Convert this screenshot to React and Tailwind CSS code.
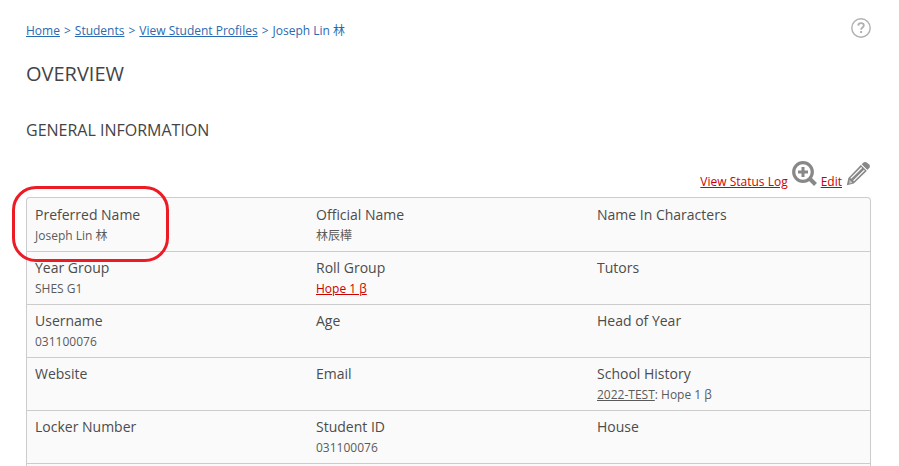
import React from "react";

const rows = [
  [
    { label: "Preferred Name", value: "Joseph Lin 林" },
    { label: "Official Name", value: "林辰樺" },
    { label: "Name In Characters" },
  ],
  [
    { label: "Year Group", value: "SHES G1" },
    {
      label: "Roll Group",
      value: (
        <a href="#roll-group" className="text-[#cc0000] underline">
          Hope 1 β
        </a>
      ),
    },
    { label: "Tutors" },
  ],
  [
    { label: "Username", value: "031100076" },
    { label: "Age" },
    { label: "Head of Year" },
  ],
  [
    { label: "Website" },
    { label: "Email" },
    {
      label: "School History",
      value: (
        <>
          <span className="underline">2022-TEST</span>: Hope 1 β
        </>
      ),
    },
  ],
  [
    { label: "Locker Number" },
    { label: "Student ID", value: "031100076" },
    { label: "House" },
  ],
];

const HelpIcon = () => (
  <svg viewBox="0 0 20 20" className="w-5 h-5" fill="none" stroke="#b0b0b0" aria-hidden="true">
    <circle cx="10" cy="10" r="9.2" strokeWidth="1.4" />
    <path d="M7.2 7.6C7.3 5.9 8.4 5.1 10 5.1c1.7 0 2.8.9 2.8 2.3 0 2-2.7 2.1-2.7 4.3" strokeWidth="1.8" />
    <path d="M10.1 13v2" strokeWidth="2" />
  </svg>
);

const ZoomIcon = () => (
  <svg viewBox="0 0 25 25" className="w-[25px] h-[25px]" fill="none" stroke="#888" aria-hidden="true">
    <circle cx="11" cy="11" r="9.3" strokeWidth="3.2" />
    <path d="M11 6v10M6 11h10" strokeWidth="3" />
    <path d="M17.5 17.5l6 6" strokeWidth="4" />
  </svg>
);

const PencilIcon = () => (
  <svg viewBox="0 0 25 25" className="w-[25px] h-[25px]" fill="#888" aria-hidden="true">
    <path d="M15.6 3.2L17.8 1.3Q19.3.4 20.8 1.5l2.4 2.1q1.400 1.500.4 3l-2.200 2.400z" />
    <path d="M15 3.800l6 6L7.800 22.600.8 24.300 2.400 17z" />
    <path d="M14.900 3.400l6.800 6.600" stroke="#fff" strokeWidth="1" />
    <path d="M15.700 6.500L4.800 17.400M18.400 9.100L7.500 19.900" stroke="#fff" strokeWidth="1.200" />
    <path d="M3.500 18.800l3 2.900-3.200 1z" fill="#fff" fillOpacity=".55" />
  </svg>
);

export default function App() {
  return (
    <main className="pl-[26px] pr-7 pt-[18px] bg-white text-[#444] font-['Open_Sans','Noto_Sans_CJK_TC',sans-serif]">
      <header className="flex items-start justify-between">
        <nav
          aria-label="Breadcrumb"
          className="flex gap-1 pt-1 text-[12px] leading-[18px] text-[#2a6ab0]"
        >
          <a href="#home" className="underline">Home</a>
          <span>&gt;</span>
          <a href="#students" className="underline">Students</a>
          <span>&gt;</span>
          <a href="#profiles" className="underline">View Student Profiles</a>
          <span>&gt;</span>
          <span>Joseph Lin 林</span>
        </nav>
        <button type="button" aria-label="Help">
          <HelpIcon />
        </button>
      </header>

      <h1 className="mt-5 text-[20px] leading-7">OVERVIEW</h1>
      <h2 className="mt-[30px] text-[16px] leading-6">GENERAL INFORMATION</h2>

      {/* Record actions */}
      <div className="mt-[19px] mb-1.5 flex justify-end gap-1 text-[12px] leading-[18px]">
        <a href="#status-log" className="flex gap-1 text-[#cc0000]">
          <span className="pt-3 underline">View Status Log</span>
          <ZoomIcon />
        </a>
        <a href="#edit" className="flex gap-1 text-[#cc0000]">
          <span className="pt-3 underline">Edit</span>
          <PencilIcon />
        </a>
      </div>

      <section className="relative">
        <div className="rounded-t border border-b-0 border-[#ccc] bg-[#fafafa] pt-px">
          <table className="w-full table-fixed text-left text-[#4c4c4c]">
            <tbody>
              {rows.map((row) => (
                <tr key={row[0].label} className="border-b border-[#ccc]">
                  {row.map((cell) => (
                    <td key={cell.label} className="px-2 pt-1 pb-1.5 align-top">
                      <div className="text-[14px] leading-6">{cell.label}</div>
                      <div className="h-[18px] text-[12px] leading-[18px] text-[#5a5a5a]">
                        {cell.value}
                      </div>
                    </td>
                  ))}
                </tr>
              ))}
              <tr>
                <td colSpan={3} className="h-0.5 p-0" />
              </tr>
            </tbody>
          </table>
        </div>

        {/* Callout around the preferred name */}
        <div className="absolute -top-[11px] -left-3.5 w-[157px] h-[76px] rounded-3xl border-3 border-[#ed1c24] pointer-events-none" />
      </section>
    </main>
  );
}
